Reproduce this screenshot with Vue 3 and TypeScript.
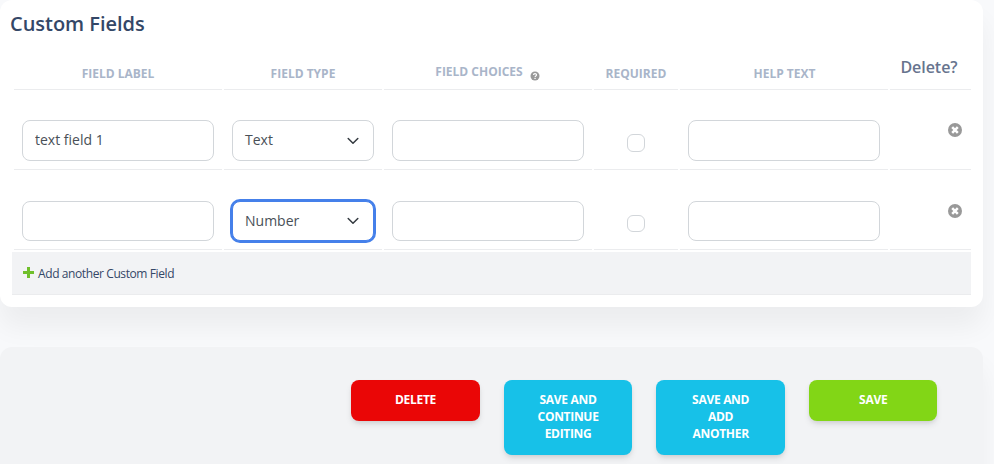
<script setup lang="ts">
import { ref } from 'vue'

interface FieldRow {
  id: number
  label: string
  type: string
  choices: string
  required: boolean
  help: string
  active: boolean
}

interface Action {
  label: string
  kind: string
}

const rows = ref<FieldRow[]>([
  { id: 1, label: 'text field 1', type: 'Text', choices: '', required: false, help: '', active: false },
  { id: 2, label: '', type: 'Number', choices: '', required: false, help: '', active: true },
])

const actions: Action[] = [
  { label: 'Delete', kind: 'danger' },
  { label: 'Save and continue editing', kind: 'info' },
  { label: 'Save and add another', kind: 'info' },
  { label: 'Save', kind: 'success' },
]

function addRow(): void {
  rows.value.push({ id: Date.now(), label: '', type: 'Text', choices: '', required: false, help: '', active: false })
}

function removeRow(id: number): void {
  rows.value = rows.value.filter((r) => r.id !== id)
}
</script>

<template>
  <main class="page">
    <section class="card">
      <h2 class="title">Custom Fields</h2>
      <div class="table">
        <div class="row head">
          <div class="cell">Field label</div>
          <div class="cell">Field type</div>
          <div class="cell choices">
            <span>Field choices</span>
            <svg class="help" viewBox="0 0 10 10">
              <circle cx="5" cy="5" r="4.5" fill="#999" />
              <path d="M3.5 4.1C3.5 2.2 6.6 2.3 6.5 4C6.4 5 5.1 4.9 5.1 6" fill="none" stroke="#fff" stroke-width="1.2" />
              <rect x="4.4" y="6.8" width="1.3" height="1.2" fill="#fff" />
            </svg>
          </div>
          <div class="cell">Required</div>
          <div class="cell help-text">Help text</div>
          <div class="cell delete">Delete?</div>
        </div>
        <div v-for="row in rows" :key="row.id" class="row body">
          <div class="cell"><input v-model="row.label" class="control" type="text" /></div>
          <div class="cell">
            <button class="control select" :class="{ active: row.active }" type="button">
              <span>{{ row.type }}</span>
              <svg class="chevron" viewBox="0 0 12 12">
                <path d="M1.2 3.5L6 8.3L10.8 3.5" fill="none" stroke="#343a40" stroke-width="1.5" stroke-linecap="round" stroke-linejoin="round" />
              </svg>
            </button>
          </div>
          <div class="cell"><input v-model="row.choices" class="control" type="text" /></div>
          <div class="cell center"><input v-model="row.required" class="check" type="checkbox" /></div>
          <div class="cell"><input v-model="row.help" class="control" type="text" /></div>
          <div class="cell end">
            <button class="remove" type="button" @click="removeRow(row.id)">
              <svg viewBox="0 0 14 14">
                <circle cx="7" cy="7" r="7" fill="#999" />
                <path d="M4.2 4.2L9.8 9.8M9.8 4.2L4.2 9.8" stroke="#fff" stroke-width="2.5" />
              </svg>
            </button>
          </div>
        </div>
      </div>
      <div class="add">
        <button class="add-link" type="button" @click="addRow">
          <svg viewBox="0 0 11 11"><path d="M4 0H7V4H11V7H7V11H4V7H0V4H4Z" fill="#70bf2b" /></svg>
          <span>Add another Custom Field</span>
        </button>
      </div>
    </section>
    <footer class="actions">
      <button v-for="a in actions" :key="a.label" class="btn" :class="a.kind" type="button">{{ a.label }}</button>
    </footer>
  </main>
</template>

<style>
body {
  background: #f8f9fb;
}
</style>

<style scoped>
.page {
  box-sizing: border-box;
  width: 994px;
  height: 464px;
  overflow: hidden;
  padding-right: 11px;
  display: flex;
  flex-direction: column;
  gap: 40px;
  font-family: "Open Sans", "Noto Sans", sans-serif;
  color: #495057;
}
.page * {
  box-sizing: border-box;
}
button {
  font-family: inherit;
  border: 0;
  margin: 0;
  padding: 0;
  background: none;
}
.card {
  flex: none;
  height: 307px;
  padding: 0 12px;
  background: #fff;
  border-radius: 12px;
  box-shadow: 0 20px 27px 0 rgba(0, 0, 0, 0.05);
}
.title {
  margin: 0 0 0 -2px;
  height: 47px;
  line-height: 47px;
  font-size: 20px;
  font-weight: 600;
  letter-spacing: -0.03px;
  color: #344767;
}
.table {
  padding-left: 2px;
}
.row {
  display: grid;
  grid-template-columns: 208px 158px 208px 84px 208px 81px;
  column-gap: 2px;
}
.cell {
  border-bottom: 1px solid #ebecee;
}
.head .cell {
  height: 43px;
  padding-top: 18px;
  line-height: 17px;
  text-align: center;
  font-size: 12px;
  font-weight: 700;
  text-transform: uppercase;
  color: #a9b5c9;
}
.head .choices {
  display: flex;
  justify-content: center;
  padding-top: 16px;
  gap: 7px;
  padding-right: 1px;
}
.head .help-text {
  padding-left: 1px;
}
.help {
  width: 10px;
  height: 10px;
  margin-top: 8px;
}
.head .delete {
  padding-top: 8px;
  padding-right: 3px;
  line-height: 24px;
  font-size: 16px;
  font-weight: 600;
  letter-spacing: -0.05px;
  text-transform: none;
  color: #67748e;
}
.body .cell {
  height: 80px;
  padding: 30px 8px 0;
}
.control {
  display: block;
  width: 100%;
  height: 41px;
  padding: 0 12px 2px;
  border: 1px solid #d2d6da;
  border-radius: 8px;
  outline: 0;
  background: #fff;
  font: 400 14px/20px "Open Sans", "Noto Sans", sans-serif;
  color: #495057;
}
.select {
  display: flex;
  align-items: center;
  justify-content: space-between;
  padding-right: 14px;
}
.body:last-child .cell {
  padding-top: 31px;
}
.body:last-child .control {
  height: 40px;
  padding-bottom: 0;
}
.control.active {
  border-color: #4580ea;
  box-shadow: 0 0 0 2px #4580ea;
}
.chevron {
  width: 12px;
  height: 12px;
}
.body:first-child .chevron,
.select:not(.active) .chevron {
  margin-top: 2px;
}
.body .center {
  display: flex;
  justify-content: center;
}
.check {
  appearance: none;
  width: 18px;
  height: 18px;
  margin: 14px 0 0;
  border: 1px solid #d2d6da;
  border-radius: 6px;
  background: #fff;
}
.body:last-child .check {
  height: 17px;
}
.body .end {
  display: flex;
  justify-content: flex-end;
  padding-right: 9px;
}
.remove {
  width: 14px;
  height: 14px;
  margin-top: 3px;
}
.remove svg {
  display: block;
}
.add {
  display: flex;
  align-items: center;
  height: 43px;
  margin-top: 2px;
  padding-left: 11px;
  background: #f2f3f5;
  border-bottom: 1px solid #ebecee;
}
.add-link {
  display: flex;
  align-items: center;
  gap: 4px;
  margin-top: 2px;
  font-size: 12px;
  line-height: 18px;
  letter-spacing: -0.4px;
  color: #344767;
}
.add-link svg {
  width: 11px;
  height: 11px;
  margin-top: -4px;
}
.actions {
  flex: none;
  display: flex;
  justify-content: flex-end;
  align-items: flex-start;
  gap: 24.2px;
  height: 140px;
  padding: 33px 45.6px 0 0;
  background: #f2f3f5;
  border-radius: 12px;
  box-shadow: 0 20px 27px 0 rgba(0, 0, 0, 0.05);
}
.btn {
  width: 128.4px;
  padding: 11px 32px 13px;
  border-radius: 8px;
  box-shadow: 0 4px 7px -1px rgba(0, 0, 0, 0.11), 0 2px 4px -1px rgba(0, 0, 0, 0.07);
  font-size: 12px;
  font-weight: 700;
  line-height: 17px;
  letter-spacing: -0.3px;
  text-align: center;
  text-transform: uppercase;
  color: #fff;
}
.danger {
  background: #ea0606;
}
.info {
  background: #17c1e8;
}
.success {
  background: #82d616;
}
</style>
